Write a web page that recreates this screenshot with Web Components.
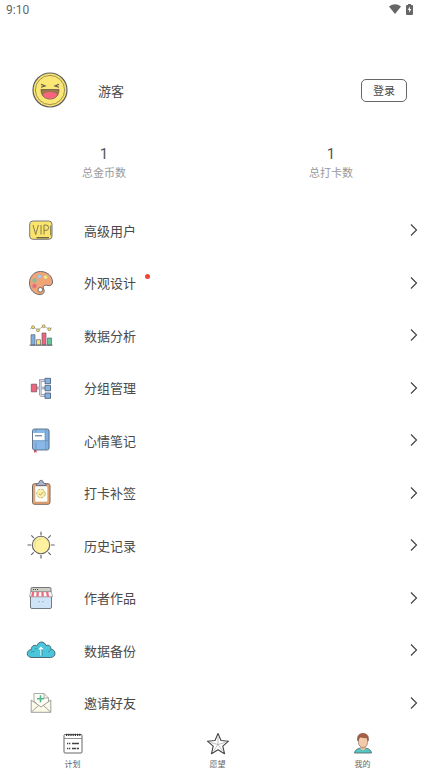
<!DOCTYPE html>
<html lang="zh-CN">
<head>
<meta charset="utf-8">
<meta name="viewport" content="width=device-width, initial-scale=1">
<title>我的</title>
<style>
  body {
    margin: 0;
    background: #fff;
    color: #4a4a4a;
    font-family: Roboto, "Noto Sans CJK SC", sans-serif;
  }
</style>
</head>
<body>
<profile-page></profile-page>

<script>
const icons = {
  coin: `
    <circle cx="18" cy="18" r="17" fill="#fbe36c" stroke="#5b5d61" stroke-width="1.200"/>
    <circle cx="18" cy="18" r="14.600" fill="#fbe774" stroke="#77704d" stroke-width=".7"/>
    <path d="M9 12.300l4 1.600-4 1.300M27 12.300l-4 1.600 4 1.300" fill="none" stroke="#555" stroke-width="1.100"/>
    <path d="M9 17.500h18c0 6-3.500 9.500-9 9.500s-9-3.500-9-9.500z" fill="#9d7650" stroke="#655b4c" stroke-width=".8"/>
    <path d="M10.800 22.800c3-3.600 11.400-3.600 14.400 0-2.700 5.200-11.700 5.200-14.400 0z" fill="#fa647c"/>`,
  vip: `
    <rect x="3.700" y="6" width="22.300" height="18.300" rx="3.200" fill="#fbe46b" stroke="#77777a"/>
    <path d="M7 10l2.700 9.500L12.400 10M15 10v9.500M18 19.500V10h2q2.600 0 2.600 2.700T20 15.400h-2" fill="none" stroke="#77724f" stroke-width=".9"/>
    <path d="M10.500 22.800H23" stroke="#333" stroke-width="1"/>
    <path d="M24.700 10.500v10" stroke="#333" stroke-width=".6"/>`,
  palette: `
    <path d="M14.500 3.500C8 3.500 3.500 8.500 3.500 15c0 6.500 4.500 11.500 10.500 11.500 4 0 5-3 3.600-5.500-1.300-3 .900-4.500 4.400-3.500 2.500.600 4.500-.500 4.500-3.500 0-6-5.500-10.500-12-10.500z" fill="#f1a576" stroke="#696b70" stroke-width="1"/>
    <g stroke="#aaa49b" stroke-width=".4">
      <circle cx="13.500" cy="8.500" r="2.100" fill="#a4cbee"/>
      <circle cx="19.600" cy="9.200" r="2.100" fill="#fae483"/>
      <circle cx="8.600" cy="12.400" r="2.100" fill="#7dc69c"/>
      <circle cx="8.400" cy="18" r="2.200" fill="#f3667b"/>
      <circle cx="14.300" cy="21.800" r="2.300" fill="#fff" stroke="#666" stroke-width=".9"/>
    </g>`,
  chart: `
    <path d="M4 9l3-2 5 3 5.500-4 6 3.200 2.500-1.500" fill="none" stroke="#888" stroke-width=".6"/>
    <g fill="#f5dc63" stroke="#77745d" stroke-width=".6">
      <circle cx="7" cy="7.200" r="1.500"/><circle cx="12" cy="10.200" r="1.500"/>
      <circle cx="17.600" cy="6.200" r="1.500"/><circle cx="23.300" cy="9.200" r="1.500"/>
    </g>
    <g stroke="#606571" stroke-width=".7">
      <path d="M5 14.700h4V25H5z" fill="#80aee0"/>
      <path d="M10.500 19.700h4V25h-4z" fill="#fae66c"/>
      <path d="M16 13h4v12h-4z" fill="#f2647c"/>
      <path d="M21.500 18h4v7h-4z" fill="#69c49b"/>
      <path d="M3.500 25.200h23" stroke-width="1"/>
    </g>`,
  group: `
    <path d="M10 15h9M14.300 22.500v-15H19M14.300 22.500H19" fill="none" stroke="#858a9e" stroke-width="2.400"/>
    <path d="M10 15h9M14.300 22.500v-15H19M14.300 22.500H19" fill="none" stroke="#d9dce6" stroke-width="1"/>
    <path d="M5.300 11.200h5.400v7.600H5.300z" fill="#f2627a" stroke="#73596a" stroke-width=".8"/>
    <path d="M19 5.300h5.500v5.400H19zM19 12.400h5.500v5.400H19zM19 20h5.500v5.400H19z" fill="#82b1e4" stroke="#56657e" stroke-width=".9"/>`,
  notebook: `
    <path d="M8 24h2.500v4L9.200 26.800 8 28z" fill="#c94b5d"/>
    <rect x="6.500" y="4" width="16.600" height="21" rx="2" fill="#87b8e8" stroke="#596b82" stroke-width=".9"/>
    <path d="M7 8h11.500v7.500H7z" fill="#fff"/>
    <path d="M9 10.800h7" stroke="#53627a" stroke-width="1"/>
    <path d="M19.700 4v21M7 15.700h16M10 18v6.500M10 4v3M22.200 5v19" fill="none" stroke="#6289b0" stroke-width=".7"/>`,
  clipboard: `
    <rect x="6.500" y="5.700" width="17.500" height="20.600" rx="2" fill="#eda56f" stroke="#79675d" stroke-width="1"/>
    <path d="M8.800 8h13v16h-13z" fill="#fffef7" stroke="#a48771" stroke-width=".5"/>
    <path d="M10.500 7.500V6l2.500-1q.300-2.800 2.200-2.800T17.500 5L20 6v1.500z" fill="#a9b4ca" stroke="#606a7e" stroke-width=".9"/>
    <circle cx="15" cy="15.500" r="4.300" fill="#fff0a4" stroke="#a8a57d" stroke-width=".8" stroke-dasharray="3 1"/>
    <path d="M12.800 15.500l1.700 1.600 3-3.400" fill="none" stroke="#9a935b" stroke-width=".8"/>`,
  sun: `
    <path d="M15 1.800v3.400M15 25v3.500M1.500 15h3.700M25 15h3.700M5.300 5.300l2.500 2.500M22.300 22.300l2.500 2.500M24.700 5.300l-2.500 2.500M7.700 22.300l-2.500 2.500" stroke="#646773" stroke-width="1.200"/>
    <circle cx="15" cy="15" r="8.700" fill="#fff1a0" stroke="#656569" stroke-width="1.100"/>
    <path d="M9.300 17.500c-1.500-5 2-8.500 6-8.500" fill="none" stroke="#d9c978" stroke-width=".7"/>`,
  shop: `
    <path d="M4.500 13v11q0 1.500 1.500 1.500h18q1.500 0 1.500-1.500V13z" fill="#cfe5f7" stroke="#666d77" stroke-width=".9"/>
    <path d="M6.200 4.500h17.600q1.200 0 1.200 1.200V9H5V5.700q0-1.200 1.200-1.200z" fill="#cecec4" stroke="#66686b" stroke-width=".9"/>
    <path d="M7 6.500h1M9 6.500h1M11 6.500h1" stroke="#444" stroke-width="1"/>
    <path d="M4.700 8.800h20.600l1.200 5h-23z" fill="#fff" stroke="#777" stroke-width=".6"/>
    <path d="M6 9h2.300l-.6 4.800H5zM10.600 9h2.300l-.3 4.800h-2.400zM15.300 9h2.300l.3 4.800h-2.400zM20 9h2.300l.9 4.800h-2.400z" fill="#ef6b80"/>
    <path d="M12.500 18.700h1.500M16 18.700h1.500" stroke="#889bac" stroke-width=".8"/>`,
  cloud: `
    <path d="M6 22.500c-6 0-6.500-7.200-.5-8-.7-3.300 3-5.200 5.300-3.600 1.600-5.200 8-5 9.200-.3 3-1.300 5.300.8 4.900 3.500 5.600.6 5.400 8.400-.4 8.400z" fill="#49c5dc" stroke="#4b6972" stroke-width="1"/>
    <path d="M5 17.500q1.500-1.500 3.500-1M8.500 14.500q1-1.300 2.500-1M22 17q2.500-.8 3-2.700" fill="none" stroke="#347f91" stroke-width=".7"/>
    <path d="M15 20.500v-8M13 14.300l2-2 2 2" fill="none" stroke="#fff" stroke-width="1.200"/>
    <path d="M16 20.500v-6" stroke="#315763" stroke-width=".6"/>`,
  invite: `
    <path d="M8 13V5.500h10l4.500 4.500v4L15 20z" fill="#fffef4" stroke="#858985" stroke-width=".7"/>
    <path d="M18 5.500V10h4.500" fill="none" stroke="#858985" stroke-width=".7"/>
    <path d="M5.200 12L15 19l9.800-7v12.300H5.200z" fill="#fcfae8" stroke="#858985" stroke-width=".8"/>
    <path d="M5.500 24l7-6.500M24.500 24l-7-6.500" stroke="#858985" stroke-width=".8"/>
    <path d="M14.500 7.200v7M11 10.700h7" stroke="#4eb690" stroke-width="1.600"/>`,
  plan: `
    <rect x="3" y="2.500" width="18" height="18.500" rx="1" fill="#fff" stroke="#666" stroke-width="1"/>
    <path d="M3 6.500h18" stroke="#777" stroke-width=".8"/>
    <path d="M5 2.900h14.500" stroke="#333" stroke-width="2.400" stroke-dasharray="1.200 1"/>
    <path d="M6 11.500h1.300M8 11.500h1.300M6 16.500h1.300M8 16.500h1.300M11 11.500h7M11 16.500h4M15.700 16.500h2.300" stroke="#444" stroke-width="1.300"/>`,
  star: `
    <path d="M12 1.500l3 7 7.600.700-5.800 5 1.700 7.500L12 17.800l-6.500 3.900 1.700-7.500-5.800-5L9 8.500z" fill="#fff" stroke="#444" stroke-width="1.100" stroke-linejoin="round"/>
    <path d="M12 5v7.500M4.500 10.500l7.500 2 7.500-2M7.500 19l4.500-6.500 4.500 6.500" fill="none" stroke="#999" stroke-width=".6"/>`,
  person: `
    <path d="M3.500 21c.5-3.500 3.500-4.500 6-5h5c2.500.5 5.500 1.500 6 5z" fill="#54c6c5" stroke="#596b70" stroke-width=".9"/>
    <path d="M9.500 13h5v4q-2.500 2.500-5 0z" fill="#e9b996"/>
    <path d="M7.500 6q0-3.500 4.500-3.500T16.500 6v4.500c0 3-2 5-4.500 5s-4.500-2-4.500-5z" fill="#f4caa9" stroke="#8b7668" stroke-width=".7"/>
    <path d="M6.800 9c-1-5 1-7.500 5.200-7.500S18.200 4 17.200 9l-1-3.200q-4.200.2-6.700-.8-1.700.8-2.700 4z" fill="#a95f43" stroke="#744c3e" stroke-width=".6"/>`
}

class AppIcon extends HTMLElement {
  constructor() {
    super()
    this.attachShadow({mode: "open"})
  }

  connectedCallback() {
    const size = this.getAttribute("box") || 30
    this.shadowRoot.innerHTML = `
      <style>
        :host {
          display: block;
          flex: none;
        }
        svg {
          display: block;
        }
      </style>
      <svg width="${size}" height="${size}" viewBox="0 0 ${size} ${size}" aria-hidden="true">${icons[this.getAttribute("name")]}</svg>
    `
  }
}
customElements.define("app-icon", AppIcon)

class StatusBar extends HTMLElement {
  constructor() {
    super()
    this.attachShadow({mode: "open"})
    this.shadowRoot.innerHTML = `
      <style>
        :host {
          display: flex;
          align-items: center;
          gap: 5px;
          height: 18px;
          padding: 0 22px 0 6px;
          font-size: 12px;
          color: #666;
        }
        span {
          margin-right: auto;
          padding-top: 2px;
        }
      </style>
      <span>9:10</span>
      <svg width="12" height="10" viewBox="0 0 12 10" aria-hidden="true">
        <path d="M0 2.500Q6-2 12 2.500L6 10z" fill="#666"/>
      </svg>
      <svg width="7" height="11" viewBox="0 0 7 11" aria-hidden="true">
        <path d="M2 0h3v1h1q1 0 1 1v8q0 1-1 1H1q-1 0-1-1V2q0-1 1-1h1z" fill="#666"/>
        <path d="M4 2.500L1.700 6h1.500v2.800L5.400 5H4z" fill="#fff"/>
      </svg>
    `
  }
}
customElements.define("status-bar", StatusBar)

class UserHeader extends HTMLElement {
  constructor() {
    super()
    this.attachShadow({mode: "open"})
    this.shadowRoot.innerHTML = `
      <style>
        :host {
          display: flex;
          align-items: center;
          padding: 54px 28px 0 32px;
        }
        h1 {
          flex: 1;
          margin: 0;
          padding-left: 30px;
          font-size: 13px;
          font-weight: 400;
        }
        button {
          width: 46px;
          padding: 2px 0 0;
          border: 1px solid #666;
          border-radius: 5px;
          background: #fff;
          color: inherit;
          font: inherit;
          font-size: 11px;
          line-height: 19px;
          cursor: pointer;
        }
      </style>
      <app-icon name="coin" box="36"></app-icon>
      <h1><slot></slot></h1>
      <button type="button">登录</button>
    `
  }
}
customElements.define("user-header", UserHeader)

class StatItem extends HTMLElement {
  constructor() {
    super()
    this.attachShadow({mode: "open"})
    this.shadowRoot.innerHTML = `
      <style>
        :host {
          display: flex;
          flex-direction: column;
          align-items: center;
        }
        strong {
          font-size: 15px;
          font-weight: 400;
          line-height: 20px;
          color: #555;
        }
        span {
          font-size: 11px;
          line-height: 20px;
          color: #999;
        }
      </style>
      <strong><slot></slot></strong>
      <span>${this.getAttribute("label")}</span>
    `
  }
}
customElements.define("stat-item", StatItem)

class MenuRow extends HTMLElement {
  constructor() {
    super()
    this.attachShadow({mode: "open"})
    this.shadowRoot.innerHTML = `
      <style>
        :host {
          display: grid;
        }
        a {
          display: flex;
          align-items: center;
          padding: 0 17px 0 26px;
          font-size: 13px;
          color: inherit;
          text-decoration: none;
        }
        .label {
          margin-left: 28px;
        }
        .dot {
          width: 5px;
          height: 5px;
          margin: 0 0 12px 9px;
          border-radius: 50%;
          background: #f44336;
        }
        .arrow {
          margin-left: auto;
        }
      </style>
      <a href="#">
        <app-icon name="${this.getAttribute("icon")}"></app-icon>
        <span class="label"><slot></slot></span>
        ${this.hasAttribute("unread") ? `<span class="dot"></span>` : ""}
        <svg class="arrow" width="8" height="14" viewBox="0 0 8 14" aria-hidden="true">
          <path d="M1 1.500l5.500 5.500L1 12.500" fill="none" stroke="#444" stroke-width="1.200"/>
        </svg>
      </a>
    `
  }
}
customElements.define("menu-row", MenuRow)

class TabLink extends HTMLElement {
  constructor() {
    super()
    this.attachShadow({mode: "open"})
    this.shadowRoot.innerHTML = `
      <style>
        :host {
          display: block;
          flex: 1;
        }
        a {
          display: flex;
          flex-direction: column;
          align-items: center;
          gap: 2px;
          font-size: 8px;
          line-height: 14px;
          color: #666;
          text-decoration: none;
        }
      </style>
      <a href="#">
        <app-icon name="${this.getAttribute("icon")}" box="24"></app-icon>
        <slot></slot>
      </a>
    `
  }
}
customElements.define("tab-link", TabLink)

class ProfilePage extends HTMLElement {
  constructor() {
    super()
    this.attachShadow({mode: "open"})
    this.render()
  }

  render() {
    this.shadowRoot.innerHTML = `
      <style>
        :host {
          display: flex;
          flex-direction: column;
          min-height: 100vh;
        }
        .stats {
          display: flex;
          justify-content: space-between;
          padding: 36px 82px 20px;
        }
        main {
          flex: 1;
          display: grid;
          grid-auto-rows: minmax(44px, 1fr);
        }
        nav {
          display: flex;
          padding: 3px 0;
        }
      </style>
      <status-bar></status-bar>
      <user-header>游客</user-header>
      <section class="stats">
        <stat-item label="总金币数">1</stat-item>
        <stat-item label="总打卡数">1</stat-item>
      </section>
      <main>
        <menu-row icon="vip">高级用户</menu-row>
        <menu-row icon="palette" unread>外观设计</menu-row>
        <menu-row icon="chart">数据分析</menu-row>
        <menu-row icon="group">分组管理</menu-row>
        <menu-row icon="notebook">心情笔记</menu-row>
        <menu-row icon="clipboard">打卡补签</menu-row>
        <menu-row icon="sun">历史记录</menu-row>
        <menu-row icon="shop">作者作品</menu-row>
        <menu-row icon="cloud">数据备份</menu-row>
        <menu-row icon="invite">邀请好友</menu-row>
      </main>
      <nav>
        <tab-link icon="plan">计划</tab-link>
        <tab-link icon="star">愿望</tab-link>
        <tab-link icon="person">我的</tab-link>
      </nav>
    `
  }
}
customElements.define("profile-page", ProfilePage)
</script>
</body>
</html>
